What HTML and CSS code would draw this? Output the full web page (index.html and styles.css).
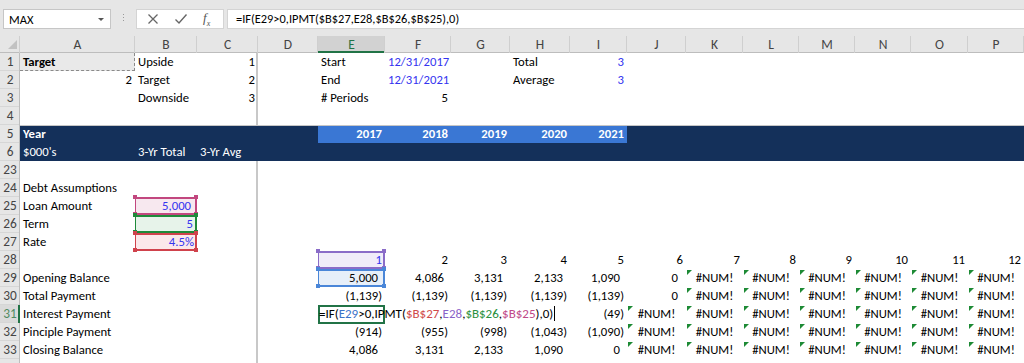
FILE: index.html
```html
<!DOCTYPE html>
<html lang="en">
<head>
    <meta charset="UTF-8">
    <title>Debt Schedule</title>
    <link rel="stylesheet" href="styles.css">
</head>
<body>
    <div class="toolbar">
        <div class="namebox"><span>MAX</span><span class="drop"></span></div>
        <div class="grip"><i></i><i></i><i></i></div>
        <div class="fxbtns">
            <svg width="12" height="12" viewBox="0 0 12 12"><path d="M1.5 1.5 L10.5 10.5 M10.5 1.5 L1.5 10.5" stroke="#666" stroke-width="1.3" fill="none"/></svg>
            <svg width="14" height="12" viewBox="0 0 14 12"><path d="M1.5 6.5 L5 10 L12.5 1.5" stroke="#666" stroke-width="1.4" fill="none"/></svg>
            <span class="fx">f<sub>x</sub></span>
        </div>
        <div class="formula">=IF(E29&gt;0,IPMT($B$27,E28,$B$26,$B$25),0)</div>
    </div>

    <div class="sheet">
        <div class="row hdr">
            <div class="corner"></div>
            <div>A</div><div>B</div><div>C</div><div>D</div><div class="on">E</div><div>F</div><div>G</div><div>H</div>
            <div>I</div><div>J</div><div>K</div><div>L</div><div>M</div><div>N</div><div>O</div><div>P</div>
        </div>

        <div class="row">
            <div class="rh">1</div>
            <div class="b copy">Target</div><div>Upside</div><div class="r">1</div><div></div>
            <div>Start</div><div class="r in">12/31/2017</div><div></div><div>Total</div><div class="r in">3</div>
            <div></div><div></div><div></div><div></div><div></div><div></div><div></div>
        </div>
        <div class="row">
            <div class="rh">2</div>
            <div class="r">2</div><div>Target</div><div class="r">2</div><div></div>
            <div>End</div><div class="r in">12/31/2021</div><div></div><div>Average</div><div class="r in">3</div>
            <div></div><div></div><div></div><div></div><div></div><div></div><div></div>
        </div>
        <div class="row">
            <div class="rh">3</div>
            <div></div><div>Downside</div><div class="r">3</div><div></div>
            <div># Periods</div><div class="r">5</div><div></div><div></div><div></div>
            <div></div><div></div><div></div><div></div><div></div><div></div><div></div>
        </div>
        <div class="row">
            <div class="rh">4</div>
            <div></div><div></div><div></div><div></div><div></div><div></div><div></div><div></div>
            <div></div><div></div><div></div><div></div><div></div><div></div><div></div><div></div>
        </div>
        <div class="row navy top">
            <div class="rh">5</div>
            <div class="b">Year</div><div></div><div></div><div></div>
            <div class="r b yr">2017</div><div class="r b yr">2018</div><div class="r b yr">2019</div><div class="r b yr">2020</div><div class="r b yr">2021</div>
            <div></div><div></div><div></div><div></div><div></div><div></div><div></div>
        </div>
        <div class="row navy">
            <div class="rh">6</div>
            <div>$000's</div><div>3-Yr Total</div><div>3-Yr Avg</div><div></div><div></div><div></div><div></div><div></div>
            <div></div><div></div><div></div><div></div><div></div><div></div><div></div><div></div>
        </div>
        <div class="row">
            <div class="rh">23</div>
            <div></div><div></div><div></div><div></div><div></div><div></div><div></div><div></div>
            <div></div><div></div><div></div><div></div><div></div><div></div><div></div><div></div>
        </div>
        <div class="row">
            <div class="rh">24</div>
            <div>Debt Assumptions</div><div></div><div></div><div></div><div></div><div></div><div></div><div></div>
            <div></div><div></div><div></div><div></div><div></div><div></div><div></div><div></div>
        </div>
        <div class="row">
            <div class="rh">25</div>
            <div>Loan Amount</div><div class="r in ref pink" style="padding-right: 6px">5,000</div><div></div><div></div><div></div><div></div><div></div><div></div>
            <div></div><div></div><div></div><div></div><div></div><div></div><div></div><div></div>
        </div>
        <div class="row">
            <div class="rh">26</div>
            <div>Term</div><div class="r in ref green" style="padding-right: 4px">5</div><div></div><div></div><div></div><div></div><div></div><div></div>
            <div></div><div></div><div></div><div></div><div></div><div></div><div></div><div></div>
        </div>
        <div class="row">
            <div class="rh">27</div>
            <div>Rate</div><div class="r in ref red">4.5%</div><div></div><div></div><div></div><div></div><div></div><div></div>
            <div></div><div></div><div></div><div></div><div></div><div></div><div></div><div></div>
        </div>
        <div class="row">
            <div class="rh">28</div>
            <div></div><div></div><div></div><div></div>
            <div class="r in ref purple wide">1</div><div class="r">2</div><div class="r">3</div><div class="r">4</div><div class="r">5</div>
            <div class="r">6</div><div class="r">7</div><div class="r">8</div><div class="r">9</div><div class="r">10</div><div class="r">11</div><div class="r">12</div>
        </div>
        <div class="row">
            <div class="rh">29</div>
            <div>Opening Balance</div><div></div><div></div><div></div>
            <div class="r acc ref blue wide">5,000</div><div class="r acc">4,086</div><div class="r acc">3,131</div><div class="r acc">2,133</div><div class="r acc">1,090</div>
            <div class="r zero">0</div><div class="err tri">#NUM!</div><div class="err tri">#NUM!</div><div class="err tri">#NUM!</div><div class="err tri">#NUM!</div><div class="err tri">#NUM!</div><div class="err tri">#NUM!</div>
        </div>
        <div class="row">
            <div class="rh">30</div>
            <div>Total Payment</div><div></div><div></div><div></div>
            <div class="r">(1,139)</div><div class="r">(1,139)</div><div class="r">(1,139)</div><div class="r">(1,139)</div><div class="r">(1,139)</div>
            <div class="r zero">0</div><div class="err tri">#NUM!</div><div class="err tri">#NUM!</div><div class="err tri">#NUM!</div><div class="err tri">#NUM!</div><div class="err tri">#NUM!</div><div class="err tri">#NUM!</div>
        </div>
        <div class="row">
            <div class="rh on">31</div>
            <div>Interest Payment</div><div></div><div></div><div></div>
            <div class="edit"><span class="etext">=IF(<b class="c-blue">E29</b>&gt;0,IPMT(<b class="c-red">$B$27</b>,<b class="c-purple">E28</b>,<b class="c-green">$B$26</b>,<b class="c-pink">$B$25</b>),0)<span class="cursor"></span></span></div>
            <div></div><div></div><div></div><div class="r">(49)</div>
            <div class="err tri">#NUM!</div><div class="err tri">#NUM!</div><div class="err tri">#NUM!</div><div class="err tri">#NUM!</div><div class="err tri">#NUM!</div><div class="err tri">#NUM!</div><div class="err tri">#NUM!</div>
        </div>
        <div class="row">
            <div class="rh">32</div>
            <div>Pinciple Payment</div><div></div><div></div><div></div>
            <div class="r">(914)</div><div class="r">(955)</div><div class="r">(998)</div><div class="r">(1,043)</div><div class="r">(1,090)</div>
            <div class="err tri">#NUM!</div><div class="err tri">#NUM!</div><div class="err tri">#NUM!</div><div class="err tri">#NUM!</div><div class="err tri">#NUM!</div><div class="err tri">#NUM!</div><div class="err tri">#NUM!</div>
        </div>
        <div class="row">
            <div class="rh">33</div>
            <div>Closing Balance</div><div></div><div></div><div></div>
            <div class="r acc">4,086</div><div class="r acc">3,131</div><div class="r acc">2,133</div><div class="r acc">1,090</div><div class="r acc">0</div>
            <div class="err tri">#NUM!</div><div class="err tri">#NUM!</div><div class="err tri">#NUM!</div><div class="err tri">#NUM!</div><div class="err tri">#NUM!</div><div class="err tri">#NUM!</div><div class="err tri">#NUM!</div>
        </div>
        <div class="row">
            <div class="rh">34</div>
            <div></div><div></div><div></div><div></div><div></div><div></div><div></div><div></div>
            <div></div><div></div><div></div><div></div><div></div><div></div><div></div><div></div>
        </div>
    </div>
</body>
</html>
```

FILE: styles.css
```css
body {
    margin: 0;
    background: #fff;
    color: #000;
    font-family: Carlito, Calibri, Lato, "Liberation Sans", sans-serif;
    font-size: 12.7px;
    overflow: hidden;
}

/* formula bar */
.toolbar {
    height: 36px;
    background: #e6e6e6;
    display: flex;
    align-items: flex-start;
    padding-top: 9px;
    box-sizing: border-box;
}
.namebox {
    width: 108px;
    height: 20px;
    margin-left: 3px;
    background: #fff;
    border: 1px solid #c6c6c6;
    box-sizing: border-box;
    display: flex;
    align-items: center;
    justify-content: space-between;
    padding: 0 6px 0 5px;
    font-size: 12.5px;
}
.drop {
    width: 0;
    height: 0;
    border-left: 3px solid transparent;
    border-right: 3px solid transparent;
    border-top: 3px solid #555;
}
.grip {
    width: 25px;
    display: flex;
    flex-direction: column;
    align-items: center;
    gap: 2px;
    padding-top: 5px;
}
.grip i {
    width: 1px;
    height: 1px;
    background: #999;
}
.fxbtns {
    width: 88px;
    height: 20px;
    background: #fff;
    border: 1px solid #d4d4d4;
    box-sizing: border-box;
    display: flex;
    align-items: center;
    gap: 15px;
    padding-left: 10px;
}
.fx {
    font-family: "Liberation Serif", serif;
    font-style: italic;
    font-size: 13px;
    color: #555;
}
.fx sub {
    font-size: 8px;
}
.formula {
    flex: 1;
    height: 20px;
    margin-left: 3px;
    background: #fff;
    border: 1px solid #d4d4d4;
    border-right: 0;
    box-sizing: border-box;
    line-height: 18px;
    padding-left: 8px;
    font-size: 12.4px;
}

/* grid */
.row {
    display: grid;
    grid-template-columns: 20px 115px 62px 61px 60px 67px 66px 59px 60px 57px 59px 57px 56px 56px 56px 57px 56px;
    height: 18px;
    line-height: 18px;
}
.row > div {
    padding: 0 3px;
    white-space: nowrap;
    position: relative;
}
.row > div:nth-child(4) {
    box-shadow: inset -2px 0 #c8c8c8;
}
.hdr {
    height: 17px;
    line-height: 17px;
}
.hdr > div,
.hdr > div:nth-child(4) {
    background: #e6e6e6;
    color: #444;
    font-size: 13.5px;
    text-align: center;
    box-shadow: inset -1px 0 #cfcfcf, inset 0 -1px #bdbdbd;
}
.hdr > .on {
    background: #d2d2d2;
    color: #217346;
    box-shadow: inset -1px 0 #cfcfcf, inset 0 -2px #217346;
}
.hdr > .corner::after {
    content: '';
    position: absolute;
    right: 3px;
    bottom: 4px;
    border-left: 9px solid transparent;
    border-bottom: 9px solid #c2c2c2;
}
.row > .rh {
    padding: 0;
    background: #e6e6e6;
    color: #444;
    font-size: 13.3px;
    text-align: center;
    box-shadow: inset -1px 0 #bdbdbd, inset 0 -1px #d6d6d6;
}
.row > .rh.on {
    background: #dadada;
    color: #4f8a62;
    box-shadow: inset -2px 0 #217346, inset 0 -1px #d6d6d6;
}

.r { text-align: right; }
.b { font-weight: bold; }
.in { color: #3434f0; }
.row > .acc { padding-right: 7px; }
.row > .zero { padding-right: 8px; }

.copy {
    background: #e9e9e9;
}
.copy::after {
    content: '';
    position: absolute;
    inset: 0 0 0 0;
    border: 1px dashed #8a8a8a;
    border-left: 0;
    border-top: 0;
}

/* navy header band */
.navy > div:not(.rh),
.navy > div:nth-child(4) {
    background: #14305a;
    color: #fff;
    box-shadow: none;
}
.navy.top > div:not(.rh) {
    box-shadow: inset 0 1px #c6c6c6;
}
.navy > .yr,
.navy.top > .yr {
    background: #3a77d4;
}

/* reference boxes */
.ref {
    --w: 62px;
    --c: #c2477f;
}
.ref.wide { --w: 67px; }
.ref::after {
    content: '';
    position: absolute;
    inset: 0;
    border: 2px solid var(--c);
    border-left-width: 1px;
    border-right-width: 2px;
}
.ref::before {
    content: '';
    position: absolute;
    left: -2px;
    top: -2px;
    width: 4px;
    height: 4px;
    background: var(--c);
    z-index: 2;
    box-shadow: calc(var(--w) - 1px) 0 var(--c), 0 17px var(--c), calc(var(--w) - 1px) 17px var(--c);
}
.pink { --c: #c2477f; background: #f7e8ef; }
.green { --c: #1f8a3a; background: #e7f3ea; }
.red { --c: #d0424c; background: #fbe8ea; }
.purple { --c: #8a6cc8; background: #f0ecf9; }
.blue { --c: #4a86d8; background: #e7eff9; }

/* errors */
.err {
    text-align: center;
}
.tri::before {
    content: '';
    position: absolute;
    left: 1px;
    top: 1px;
    border-top: 5px solid #1d8a35;
    border-right: 5px solid transparent;
}

/* cell being edited */
.row > .edit {
    padding: 0 0 0 1px;
    z-index: 3;
}
.edit::after {
    content: '';
    position: absolute;
    inset: 0 0 -1px 0;
    border: 2px solid #217346;
}
.etext {
    position: relative;
    z-index: 1;
    font-size: 13px;
}
.etext b { font-weight: normal; }
.c-blue { color: #3a72c8; }
.c-red { color: #d04a4a; }
.c-purple { color: #8a62c8; }
.c-green { color: #2a9040; }
.c-pink { color: #c04888; }
.cursor {
    display: inline-block;
    width: 1px;
    height: 15px;
    background: #000;
    vertical-align: -3px;
    margin-left: 1px;
}
```
